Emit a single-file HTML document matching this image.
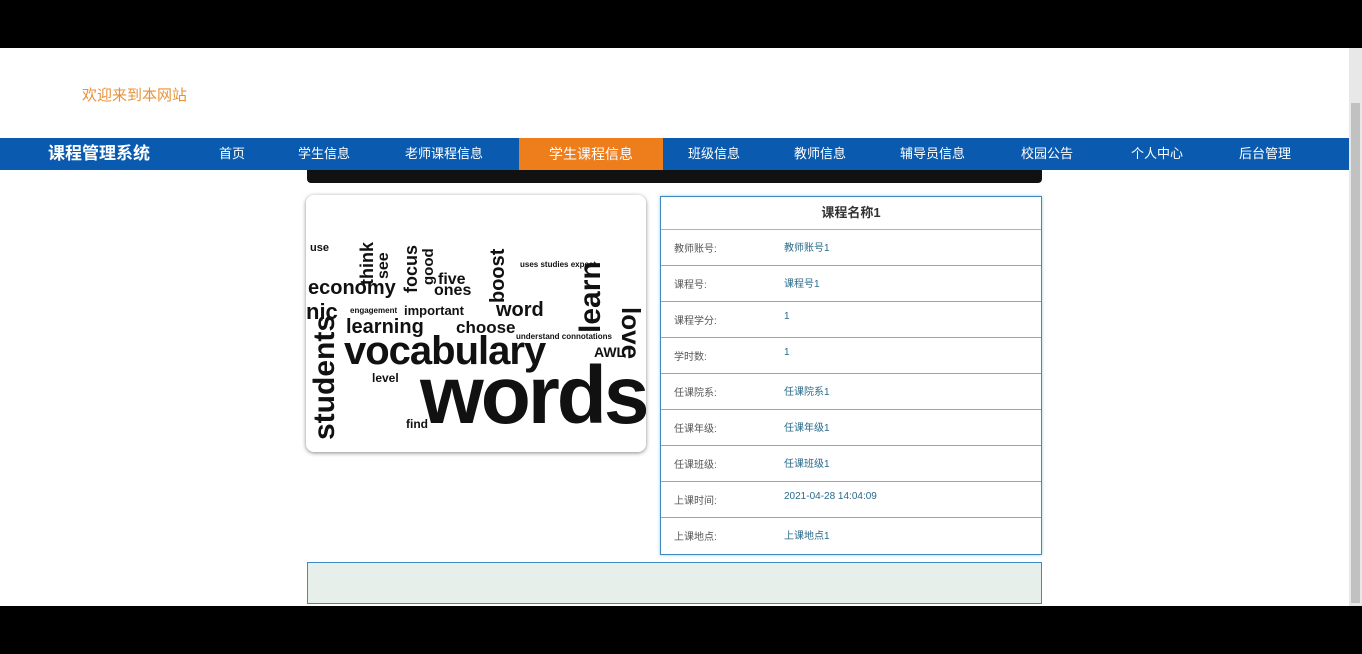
<!DOCTYPE html><html><head><meta charset="utf-8"><style>
body{margin:0;width:1362px;height:654px;background:#000;position:relative;overflow:hidden;font-family:"Liberation Sans","Noto Sans CJK SC",sans-serif}
.page{position:absolute;left:0;top:48px;width:1349px;height:558px;background:#fff;overflow:hidden}
.sb{position:absolute;left:1349px;top:48px;width:13px;height:558px;background:#e8e8e8}
.sb div{position:absolute;left:2px;top:55px;width:9px;height:500px;background:#c1c1c1}
.welcome{position:absolute;left:82px;top:36px;color:#e8923a;font-size:15px}
.nav{position:absolute;left:0;top:90px;width:1349px;height:32px;background:#0a5bb0}
.nav span{position:absolute;top:0;line-height:32px;color:#fff;font-size:13px}
.nav .t{font-size:17px;font-weight:bold;left:48px}
.nav .act{background:#ee7d1c;left:519px;width:144px;text-align:center;font-size:14px}
.bar{position:absolute;left:307px;top:122px;width:735px;height:13px;background:#111;border-radius:0 0 4px 4px}
.cloud{position:absolute;left:306px;top:147px;width:340px;height:257px;background:#fff;border-radius:8px;box-shadow:0 1px 4px #888;overflow:hidden}
.cloud span{position:absolute;color:#111;font-weight:bold;white-space:nowrap;line-height:1}
.tbl{position:absolute;left:660px;top:148px;width:380px;height:357px;border:1px solid #3d8ac4;box-shadow:0 0 3px #9cc}
.tbl .h{height:32px;line-height:32px;text-align:center;font-size:13px;font-weight:bold;color:#333;border-bottom:1px solid #9bb}
.tbl .r{height:35px;border-bottom:1px solid #8ab;position:relative;font-size:10px}
.tbl .r:last-child{border-bottom:none}
.r .l{position:absolute;left:13px;top:10px;color:#555}
.r .v{position:absolute;left:123px;top:9px;color:#2a6a8a}
.foot{position:absolute;left:307px;top:514px;width:733px;height:40px;border:1px solid #3d8ac4;background:#e6efea}
</style></head><body>
<div class="page">
<div class="welcome">欢迎来到本网站</div>
<div class="nav"><span class="t">课程管理系统</span><span style="left:219px">首页</span><span style="left:298px">学生信息</span><span style="left:405px">老师课程信息</span><span class="act">学生课程信息</span><span style="left:688px">班级信息</span><span style="left:794px">教师信息</span><span style="left:900px">辅导员信息</span><span style="left:1021px">校园公告</span><span style="left:1131px">个人中心</span><span style="left:1239px">后台管理</span></div>
<div class="bar"></div>
<div class="cloud">
<span style="left:114px;top:160px;font-size:82px;letter-spacing:-3px">words</span>
<span style="left:38px;top:136px;font-size:40px;letter-spacing:-1px">vocabulary</span>
<span style="left:40px;top:122px;font-size:20px">learning</span>
<span style="left:150px;top:124px;font-size:17px">choose</span>
<span style="left:2px;top:83px;font-size:20px">economy</span>
<span style="left:190px;top:105px;font-size:20px">word</span>
<span style="left:128px;top:88px;font-size:16px">ones</span>
<span style="left:98px;top:109px;font-size:13px">important</span>
<span style="left:288px;top:150px;font-size:14px">AWL</span>
<span style="left:66px;top:177px;font-size:12px">level</span>
<span style="left:100px;top:223px;font-size:12px">find</span>
<span style="font-size:30px;transform:rotate(-90deg);transform-origin:0 0;top:245px;left:4px">students</span>
<span style="left:270px;top:138px;font-size:30px;transform:rotate(-90deg);transform-origin:0 0">learn</span>
<span style="font-size:26px;transform:rotate(90deg);transform-origin:0 0;left:338px;top:112px">love</span>
<span style="left:182px;top:108px;font-size:20px;transform:rotate(-90deg);transform-origin:0 0">boost</span>
<span style="left:96px;top:98px;font-size:18px;transform:rotate(-90deg);transform-origin:0 0">focus</span>
<span style="left:52px;top:90px;font-size:18px;transform:rotate(-90deg);transform-origin:0 0">think</span>
<span style="left:70px;top:84px;font-size:16px;transform:rotate(-90deg);transform-origin:0 0">see</span>
<span style="left:115px;top:90px;font-size:15px;transform:rotate(-90deg);transform-origin:0 0">good</span>
<span style="left:132px;top:77px;font-size:16px">five</span>
<span style="left:4px;top:48px;font-size:11px">use</span>
<span style="left:214px;top:66px;font-size:8px">uses studies expect</span>
<span style="left:44px;top:112px;font-size:8px">engagement</span>
<span style="left:210px;top:138px;font-size:8px">understand connotations</span>
<span style="left:0;top:106px;font-size:22px">nic</span>
</div>
<div class="tbl">
<div class="h">课程名称1</div>
<div class="r"><span class="l">教师账号:</span><span class="v">教师账号1</span></div>
<div class="r"><span class="l">课程号:</span><span class="v">课程号1</span></div>
<div class="r"><span class="l">课程学分:</span><span class="v">1</span></div>
<div class="r"><span class="l">学时数:</span><span class="v">1</span></div>
<div class="r"><span class="l">任课院系:</span><span class="v">任课院系1</span></div>
<div class="r"><span class="l">任课年级:</span><span class="v">任课年级1</span></div>
<div class="r"><span class="l">任课班级:</span><span class="v">任课班级1</span></div>
<div class="r"><span class="l">上课时间:</span><span class="v">2021-04-28 14:04:09</span></div>
<div class="r"><span class="l">上课地点:</span><span class="v">上课地点1</span></div>
</div>
<div class="foot"></div>
</div>
<div class="sb"><div></div></div>
</body></html>
